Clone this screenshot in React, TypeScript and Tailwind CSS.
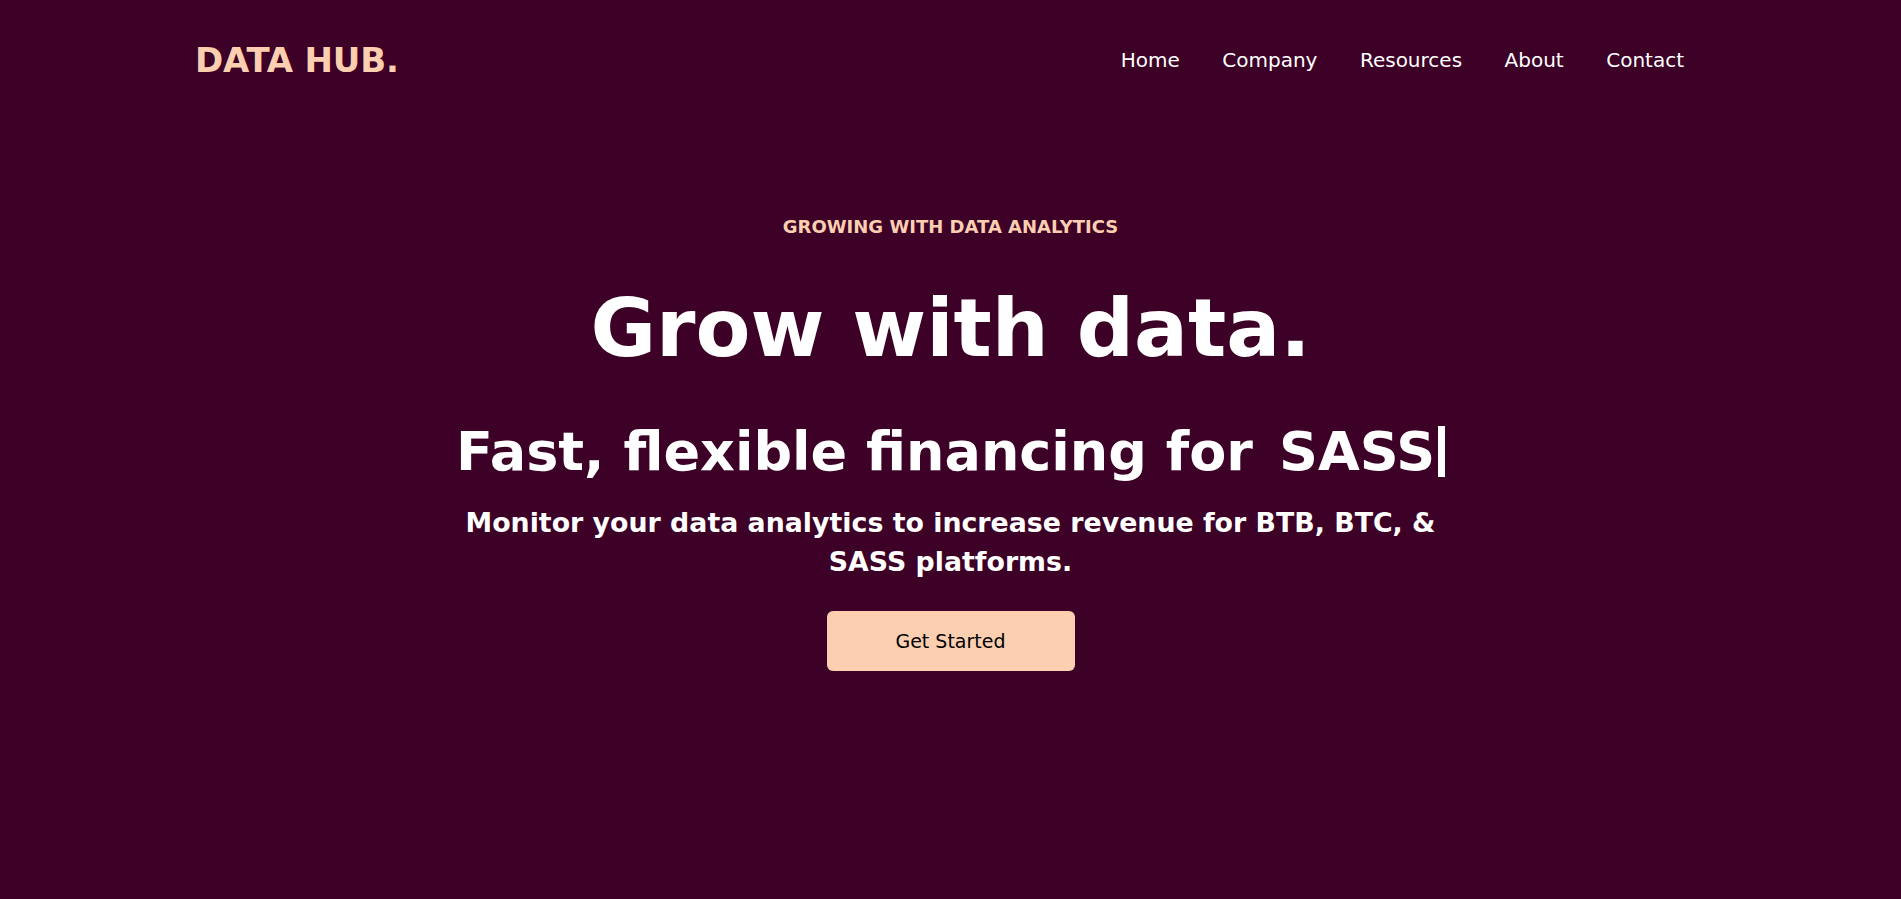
import React from 'react';

const navLinks = ['Home', 'Company', 'Resources', 'About', 'Contact'];

function Header() {
  return <header className="h-[120px] flex items-center justify-between pl-[195px] pr-[217px]">
      <h1 className="text-[34px] font-bold text-[#fccfb0] leading-none tracking-[-0.2px]">
        DATA HUB.
      </h1>
      <nav className="flex items-center gap-[42.5px]">
        {navLinks.map(link => <a key={link} href="#" className="text-[20px] text-white leading-none">
            {link}
          </a>)}
      </nav>
    </header>;
}

function Hero() {
  return <section className="flex flex-col items-center text-center pt-[93px]">
      <p className="text-[18px] leading-[27px] font-bold text-[#fccfb0]">
        GROWING WITH DATA ANALYTICS
      </p>
      <h2 className="mt-[49px] text-[80px] leading-[80px] font-bold text-white">
        Grow with data.
      </h2>
      <div className="mt-[50px] flex items-center text-[54px] leading-[65px] font-bold text-white">
        <span>Fast, flexible financing for</span>
        <span className="ml-[26px]">SASS</span>
        <span className="ml-[3px] inline-block w-[7px] h-[51px] bg-white" />
      </div>
      <p className="mt-[19px] max-w-[1000px] text-[26.8px] leading-[39px] font-bold text-white">
        Monitor your data analytics to increase revenue for BTB, BTC, &amp; SASS platforms.
      </p>
      <button className="mt-[30px] w-[248px] h-[60px] rounded-md bg-[#fccfb0] text-black text-[19px]">
        Get Started
      </button>
    </section>;
}

export default function App() {
  return <div className="min-h-screen bg-[#3d0026] font-['DejaVu_Sans',sans-serif]">
      <Header />
      <Hero />
    </div>;
}
